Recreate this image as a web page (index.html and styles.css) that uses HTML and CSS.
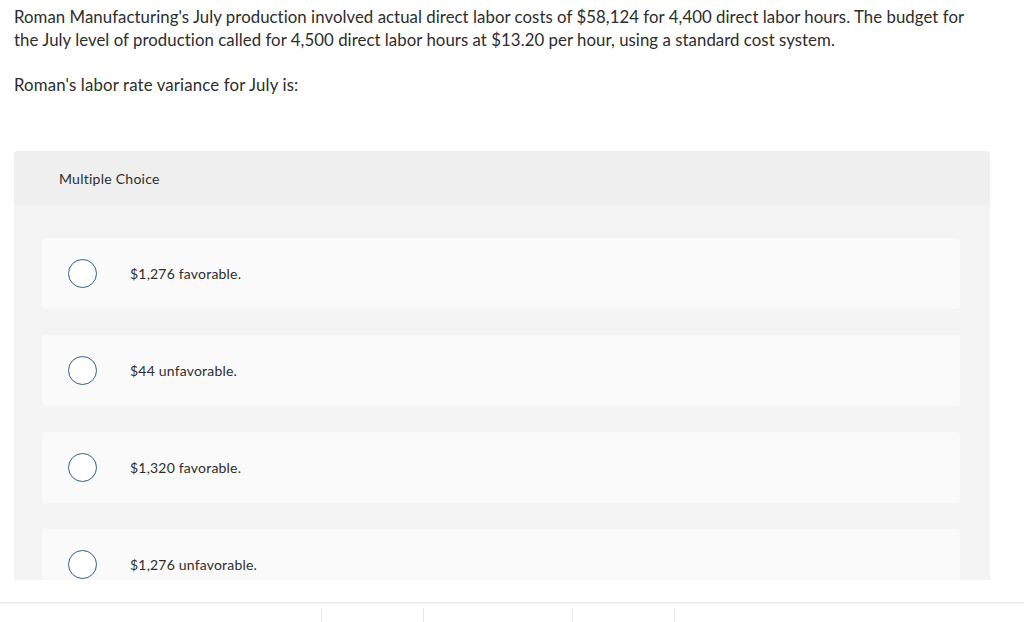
FILE: index.html
```html
<!DOCTYPE html>
<html lang="en">
<head>
<meta charset="utf-8">
<title>Multiple Choice</title>
<link rel="stylesheet" href="styles.css">
</head>
<body>
<div class="viewport">
  <div class="content">
    <p class="question">Roman Manufacturing's July production involved actual direct labor costs of $58,124 for 4,400 direct labor hours. The budget for the July level of production called for 4,500 direct labor hours at $13.20 per hour, using a standard cost system.</p>
    <p class="prompt">Roman's labor rate variance for July is:</p>
    <section class="panel">
      <header class="panel-head">Multiple Choice</header>
      <div class="options">
        <label class="option"><span class="radio"></span><span class="opt-text">$1,276 favorable.</span></label>
        <label class="option"><span class="radio"></span><span class="opt-text">$44 unfavorable.</span></label>
        <label class="option"><span class="radio"></span><span class="opt-text">$1,320 favorable.</span></label>
        <label class="option"><span class="radio"></span><span class="opt-text">$1,276 unfavorable.</span></label>
      </div>
    </section>
  </div>
</div>
<footer class="footer">
  <div class="footer-cells">
    <span class="cell c1"></span>
    <span class="cell c2"></span>
    <span class="cell c3"></span>
    <span class="cell c4"></span>
  </div>
</footer>
</body>
</html>
```
FILE: styles.css
```css
html, body {
  margin: 0;
  padding: 0;
  background: #fff;
}
body {
  font-family: Lato, "Liberation Sans", sans-serif;
  color: #2d2d2d;
  width: 1024px;
  height: 622px;
  overflow: hidden;
}
.viewport {
  height: 580px;
  overflow: hidden;
}
.content {
  width: 976px;
  padding: 5px 0 0 14px;
}
.question {
  margin: 0;
  max-width: 966px;
  font-size: 16.8px;
  line-height: 23px;
  letter-spacing: 0.05px;
}
.prompt {
  margin: 22px 0 0;
  font-size: 16.8px;
  line-height: 23px;
  letter-spacing: 0.15px;
}
.panel {
  margin-top: 55px;
  background: #f4f4f4;
  border-radius: 4px 4px 0 0;
  padding-bottom: 40px;
}
.panel-head {
  height: 54px;
  display: flex;
  align-items: center;
  padding-left: 45px;
  background: #efefef;
  border-radius: 4px 4px 0 0;
  font-size: 14px;
  letter-spacing: 0.25px;
}
.options {
  display: flex;
  flex-direction: column;
  gap: 26px;
  padding: 33px 30px 0 28px;
}
.option {
  height: 71px;
  background: #fafafa;
  border-radius: 4px;
  display: flex;
  align-items: center;
  padding-left: 26px;
}
.radio {
  width: 27px;
  height: 27px;
  border: 1.5px solid #2b5f93;
  border-radius: 50%;
  background: #fff;
  flex: none;
}
.opt-text {
  margin-left: 33px;
  font-size: 14px;
  letter-spacing: 0.2px;
}
.footer {
  height: 42px;
  display: flex;
  flex-direction: column;
}
.footer-cells {
  margin-top: 22px;
  border-top: 2px solid #efefef;
  flex: 1;
  display: flex;
  padding-top: 4px;
}
.cell {
  border-left: 1px solid #e6e6e6;
  height: 100%;
}
.c1 { margin-left: 321px; width: 101px; }
.c2 { width: 148px; }
.c3 { width: 101px; }
.c4 { width: 0; }
```
